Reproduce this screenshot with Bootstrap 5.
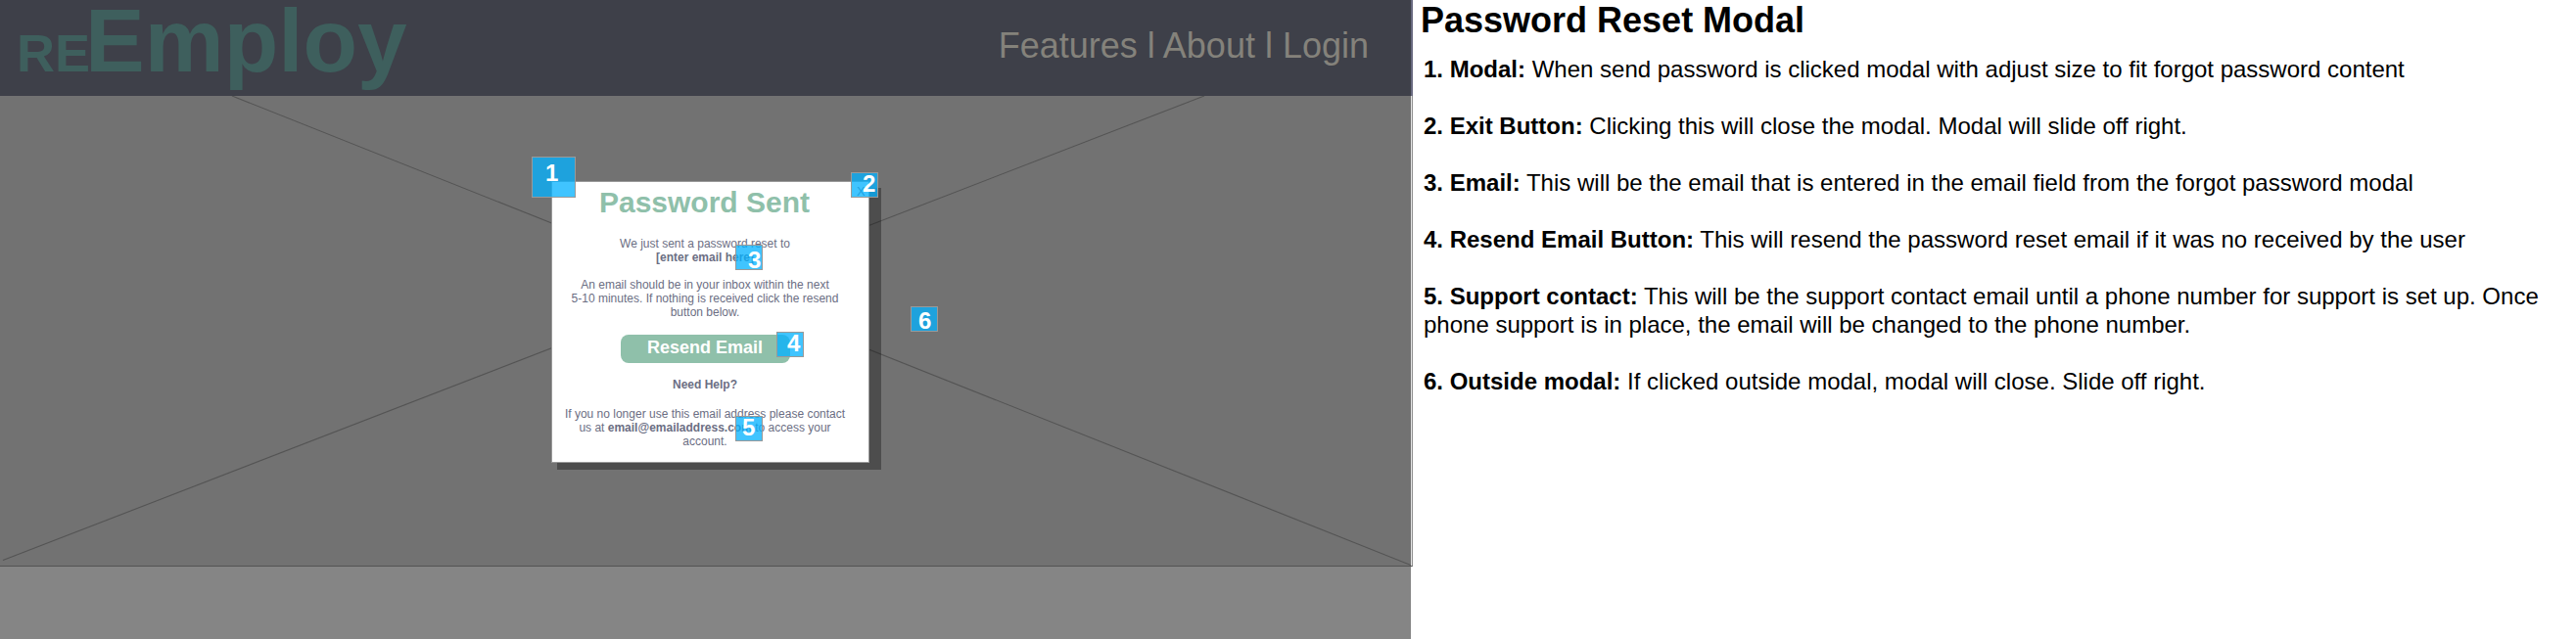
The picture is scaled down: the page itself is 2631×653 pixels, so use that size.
<!DOCTYPE html>
<html lang="en">
<head>
<meta charset="utf-8">
<title>Password Reset Modal</title>
<link href="https://cdn.jsdelivr.net/npm/bootstrap@5.3.0/dist/css/bootstrap.min.css" rel="stylesheet">
<style>
body{font-family:"Liberation Sans",Arial,sans-serif;background:#fff;color:#000}
.board{height:653px}
.wire{width:1443px}
.topbar{height:98px;background:#3e4049;border-right:2px solid #68697f;padding:0 43px 0 17px}
.logo{color:#3e5f5d;font-weight:700;font-size:91px;line-height:85px;margin-top:-1px}
.logo-sm{font-size:54px;margin-right:-5px}
.links{color:#84827b;font-size:36px;line-height:42px;margin-top:26px;white-space:pre}
.stage{height:481px;background:#727272;border-bottom:1px solid #545454;border-right:1px solid #8f8f8f}
.stage svg.cross{width:1441px;height:480px}
.stage::after{content:"";position:absolute;right:0;top:0;width:1px;height:480px;background:#e4e4e4}
.foot{background:#858585;width:1441px}
.dialog-box{width:325px;height:288px;margin:87px 0 0 563px;background:#fff;border:1px solid #999;color:#6b6e83;font-size:12px;line-height:14px;padding-right:11px}
.shade{left:569px;top:94px;width:331px;height:288px;background:rgba(0,0,0,.32)}
.dialog-box h2{color:#8fc0aa;font-size:30px;line-height:34px;font-weight:700;margin:4px 0 18px;padding-right:1px}
.dialog-box p{margin:0 0 14px;white-space:nowrap}
.dialog-box .help{margin-bottom:16px}
.resend{width:173px;height:29px;border-radius:8px;background:#8fc0aa;color:#fff;font-size:18px;line-height:25px;font-weight:700;padding:0 0 2px;border:0;margin:16px 0 15px}
.exit{left:311px;top:3px;font-size:13px}
.pin{background:rgba(4,177,255,.76);border:1px solid #999;width:28px;height:26px;color:#fff;font-weight:700;font-size:24px;line-height:24px}
.notes{padding-left:11px}
.notes h1{font-size:36px;line-height:41px;font-weight:700;margin:0 0 15px -3px}
.notes p{font-size:24px;line-height:29px;margin-bottom:29px;white-space:nowrap}
</style>
</head>
<body>
<main class="board d-flex overflow-hidden">
  <section class="wire d-flex flex-column flex-shrink-0">
    <header class="topbar d-flex justify-content-between align-items-start">
      <div class="logo text-nowrap"><span class="logo-sm">RE</span>Employ</div>
      <nav class="links">Features l About l Login</nav>
    </header>
    <div class="stage position-relative d-flex align-items-start">
      <svg class="cross position-absolute top-0 start-0" viewBox="0 0 1441 480" fill="none" stroke="#545454" stroke-width="1.1"><path d="M237 0 1441 479.500M3 474.500 1230 0"/></svg>
      <div class="shade position-absolute"></div>
      <div class="dialog-box position-relative text-center">
        <span class="exit position-absolute">X</span>
        <h2>Password Sent</h2>
        <p>We just sent a password reset to<br><b>[enter email here]</b></p>
        <p>An email should be in your inbox within the next<br>5-10 minutes. If nothing is received click the resend<br>button below.</p>
        <button class="resend btn d-block mx-auto">Resend Email</button>
        <p class="help"><b>Need Help?</b></p>
        <p>If you no longer use this email address please contact<br>us at <b>email@emailaddress.com</b> to access your<br>account.</p>
      </div>
      <span class="pin position-absolute" style="left:543px;top:62px;width:45px;height:42px;padding:4px 0 0 13px">1</span>
      <span class="pin position-absolute" style="left:869px;top:78px;padding-left:11px;line-height:21px">2</span>
      <span class="pin position-absolute" style="left:751px;top:152px;padding-left:12px;line-height:30px">3</span>
      <span class="pin position-absolute" style="left:793px;top:241px;padding-left:10px;line-height:22px">4</span>
      <span class="pin position-absolute" style="left:751px;top:327px;padding-left:6px;line-height:22px">5</span>
      <span class="pin position-absolute" style="left:930px;top:215px;padding-left:7px;line-height:28px">6</span>
    </div>
    <div class="foot flex-grow-1"></div>
  </section>
  <section class="notes flex-grow-1">
    <h1>Password Reset Modal</h1>
    <p><b>1. Modal:</b> When send password is clicked modal with adjust size to fit forgot password content</p>
    <p><b>2. Exit Button:</b> Clicking this will close the modal. Modal will slide off right.</p>
    <p><b>3. Email:</b> This will be the email that is entered in the email field from the forgot password modal</p>
    <p><b>4. Resend Email Button:</b> This will resend the password reset email if it was no received by the user</p>
    <p><b>5. Support contact:</b> This will be the support contact email until a phone number for support is set up. Once<br>phone support is in place, the email will be changed to the phone number.</p>
    <p><b>6. Outside modal:</b> If clicked outside modal, modal will close. Slide off right.</p>
  </section>
</main>
<script src="https://cdn.jsdelivr.net/npm/bootstrap@5.3.0/dist/js/bootstrap.bundle.min.js"></script>
</body>
</html>
